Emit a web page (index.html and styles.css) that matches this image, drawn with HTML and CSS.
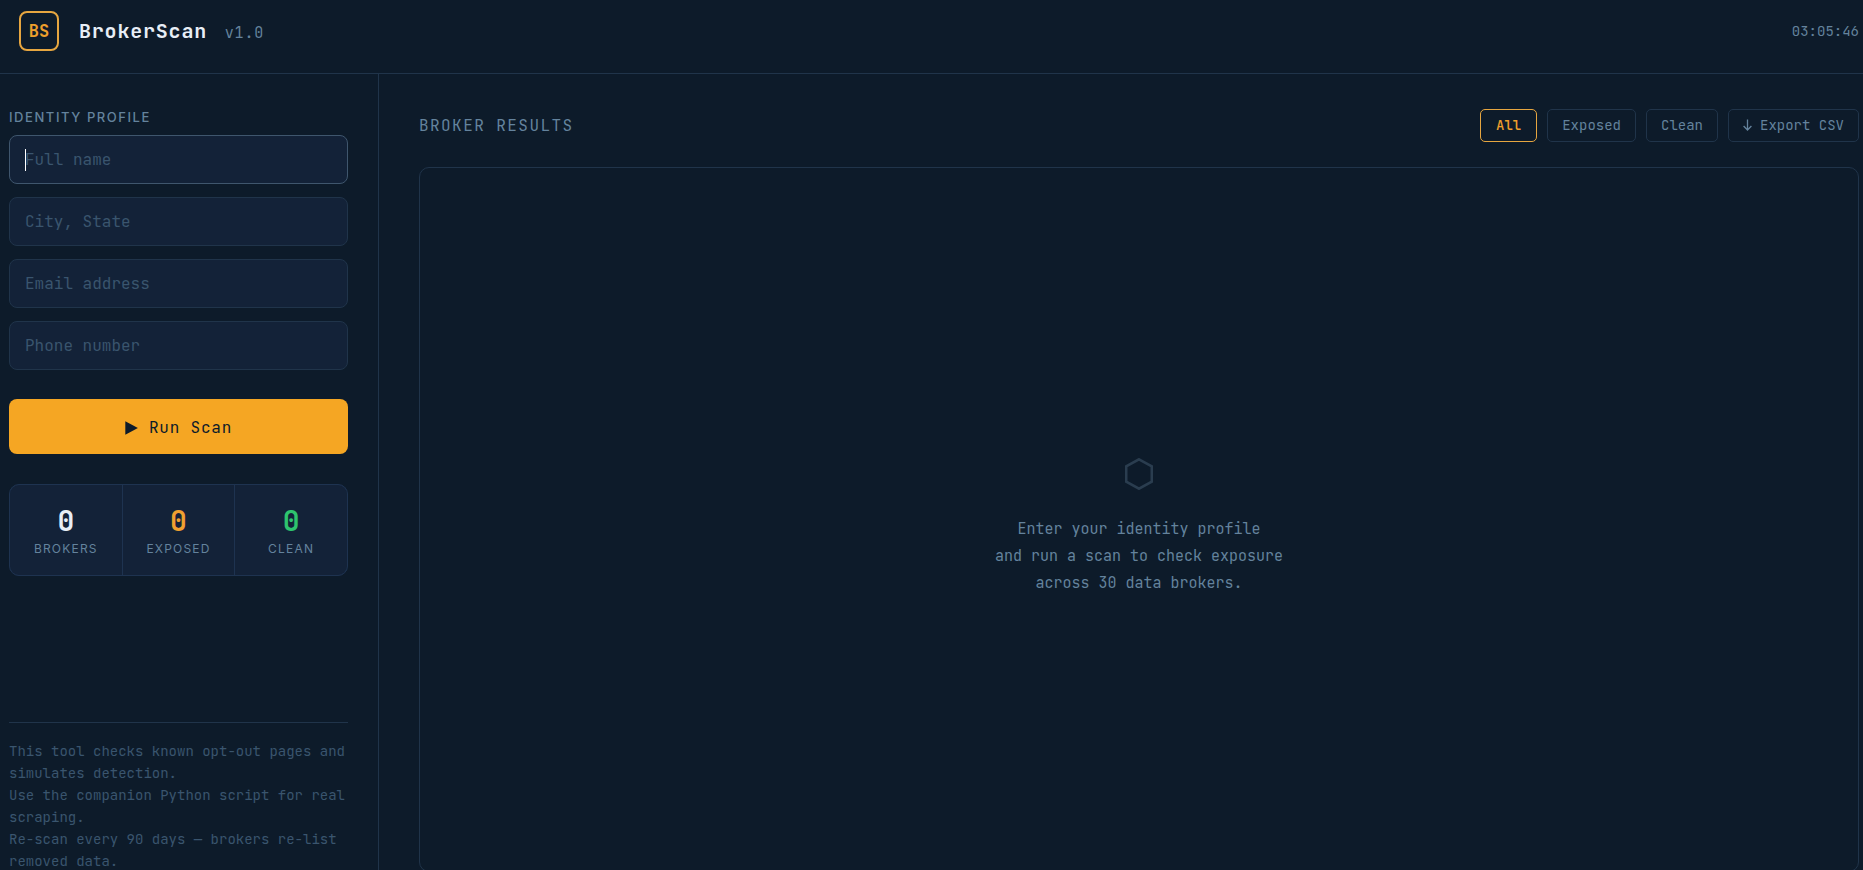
FILE: index.html
```html
<!DOCTYPE html>
<html lang="en">
<head>
<meta charset="utf-8">
<title>BrokerScan</title>
<meta name="viewport" content="width=device-width, initial-scale=1">
<link rel="stylesheet" href="styles.css">
</head>
<body>
<header class="topbar">
  <div class="brand">
    <div class="logo">BS</div>
    <h1 class="title">BrokerScan <span class="version">v1.0</span></h1>
  </div>
  <time class="clock">03:05:46</time>
</header>
<div class="layout">
  <aside class="sidebar">
    <form class="profile">
      <h2 class="section-label">Identity Profile</h2>
      <div class="fields">
        <div class="field-wrap">
          <input class="field" type="text" placeholder="Full name" aria-label="Full name" autofocus>
          <span class="caret" aria-hidden="true"></span>
        </div>
        <input class="field" type="text" placeholder="City, State" aria-label="City, State">
        <input class="field" type="email" placeholder="Email address" aria-label="Email address">
        <input class="field" type="tel" placeholder="Phone number" aria-label="Phone number">
      </div>
      <button class="run" type="button">
        <svg class="play" viewBox="0 0 13 14" aria-hidden="true"><path d="M0.3 0.3 12.9 7 0.3 13.7z" fill="currentColor"/></svg>
        <span>Run Scan</span>
      </button>
    </form>
    <div class="stats">
      <div class="stat"><div class="num">0</div><div class="stat-label">Brokers</div></div>
      <div class="stat"><div class="num exposed">0</div><div class="stat-label">Exposed</div></div>
      <div class="stat"><div class="num clean">0</div><div class="stat-label">Clean</div></div>
    </div>
    <footer class="note">
      This tool checks known opt-out pages and simulates detection.<br>
      Use the companion Python script for real scraping.<br>
      Re-scan every 90 days — brokers re-list removed data.
    </footer>
  </aside>
  <main class="results">
    <div class="results-head">
      <h2 class="results-title">BROKER RESULTS</h2>
      <div class="filters">
        <button class="filter active" type="button">All</button>
        <button class="filter" type="button">Exposed</button>
        <button class="filter" type="button">Clean</button>
        <button class="filter" type="button">
          <svg class="down" viewBox="0 0 9 12" aria-hidden="true"><path d="M4.5 0.5V11M0.6 7 4.5 11 8.4 7" fill="none" stroke="currentColor" stroke-width="1.3"/></svg>
          <span>Export CSV</span>
        </button>
      </div>
    </div>
    <section class="panel">
      <svg class="hex" viewBox="0 0 28 32" aria-hidden="true"><path d="M14 1.3 26.8 8.4V23.6L14 30.7 1.2 23.6V8.4z" fill="none" stroke="currentColor" stroke-width="2.6"/></svg>
      <p class="empty">Enter your identity profile<br>and run a scan to check exposure<br>across 30 data brokers.</p>
    </section>
  </main>
</div>
</body>
</html>
```
FILE: styles.css
```css
:root {
  --bg: #0d1b2a;
  --surface: #132238;
  --border: #20344a;
  --muted: #64839d;
  --faint: #3a556e;
  --amber: #f5a623;
  --mono: "JetBrains Mono", "DejaVu Sans Mono", monospace;
  --sans: Inter, "Liberation Sans", sans-serif;
}
* { box-sizing: border-box; }
html { height: 100%; overflow: hidden; background: var(--bg); }
body {
  display: flex;
  flex-direction: column;
  height: calc(100vh + 2px);
  margin: 0;
  background: var(--bg);
  color: #e8eef6;
  font-family: var(--mono);
  font-size: 14px;
}
h1, h2, p { margin: 0; font-weight: 400; }
button, input { font-family: inherit; }

.topbar {
  display: flex;
  align-items: center;
  justify-content: space-between;
  padding: 11px 4px 22px 19px;
  border-bottom: 1px solid var(--border);
}
.brand { display: flex; align-items: center; gap: 20px; }
.logo {
  display: grid;
  place-items: center;
  width: 40px;
  height: 40px;
  border: 2px solid #e6a640;
  border-radius: 8px;
  color: #ee9f2c;
  font-size: 17px;
  font-weight: 700;
}
.title { font-size: 20px; font-weight: 700; letter-spacing: 0.04em; }
.version { margin-left: 5px; color: var(--muted); font-size: 15px; font-weight: 400; }
.clock { color: var(--muted); }

.layout { display: flex; flex: 1; min-height: 0; }
.sidebar {
  display: flex;
  flex-direction: column;
  flex: 0 0 379px;
  padding: 32px 30px 0 9px;
  border-right: 1px solid var(--border);
}
.section-label {
  margin-bottom: 6px;
  color: var(--muted);
  font-family: var(--sans);
  font-size: 13px;
  font-weight: 500;
  line-height: 23px;
  letter-spacing: 0.12em;
  text-transform: uppercase;
}
.fields { display: grid; gap: 13px; }
.field-wrap { position: relative; display: grid; }
.caret {
  position: absolute;
  top: 14px;
  left: 16px;
  width: 1px;
  height: 22px;
  background: #ffffff;
}
.field {
  width: 100%;
  height: 49px;
  padding: 0 15px;
  border: 1px solid var(--border);
  border-radius: 8px;
  background: var(--surface);
  color: #e8eef6;
  font-size: 16px;
}
.field::placeholder { color: var(--faint); opacity: 1; }
.field:focus { outline: none; border-color: #3f566d; caret-color: transparent; }
.run {
  display: flex;
  align-items: center;
  justify-content: center;
  gap: 11px;
  width: 100%;
  height: 55px;
  margin-top: 29px;
  padding: 2px 0 0;
  border: 0;
  border-radius: 8px;
  background: var(--amber);
  color: var(--bg);
  font-size: 16px;
  letter-spacing: 0.05em;
}
.play { width: 13px; height: 14px; }
.stats {
  display: grid;
  grid-template-columns: repeat(3, 1fr);
  gap: 1px;
  margin-top: 30px;
  border: 1px solid #1e3350;
  border-radius: 10px;
  background: #1e3350;
  overflow: hidden;
}
.stat { padding: 19px 4px 15px; background: var(--surface); text-align: center; }
.num { font-size: 28px; font-weight: 700; line-height: 34px; }
.num.exposed { color: #f0a030; }
.num.clean { color: #2ec46e; }
.stat-label {
  color: var(--muted);
  font-family: var(--sans);
  font-size: 12px;
  line-height: 22px;
  letter-spacing: 0.1em;
  text-transform: uppercase;
}
.note {
  margin-top: auto;
  padding-top: 17px;
  border-top: 1px solid var(--border);
  color: var(--faint);
  line-height: 22px;
}

.results {
  display: flex;
  flex: 1;
  flex-direction: column;
  min-width: 0;
  padding: 35px 4px 0 40px;
}
.results-head {
  display: flex;
  align-items: center;
  justify-content: space-between;
  margin-bottom: 25px;
}
.results-title { color: var(--muted); font-size: 16px; letter-spacing: 0.09em; }
.filters { display: flex; gap: 10px; }
.filter {
  display: flex;
  align-items: center;
  gap: 8px;
  height: 33px;
  padding: 0 14px 2px;
  border: 1px solid var(--border);
  border-radius: 5px;
  background: transparent;
  color: var(--muted);
  font-size: 14px;
}
.filter.active { padding: 0 15px 2px; border-color: #e6a640; color: #ee9f2c; font-weight: 500; }
.down { width: 9px; height: 12px; }
.panel {
  display: flex;
  flex: 1;
  flex-direction: column;
  align-items: center;
  justify-content: center;
  padding-top: 15px;
  border: 1px solid var(--border);
  border-radius: 10px;
}
.hex { width: 28px; height: 32px; margin-bottom: 26px; color: #2a3d4f; }
.empty { color: var(--muted); font-size: 15px; line-height: 27px; text-align: center; }
```
